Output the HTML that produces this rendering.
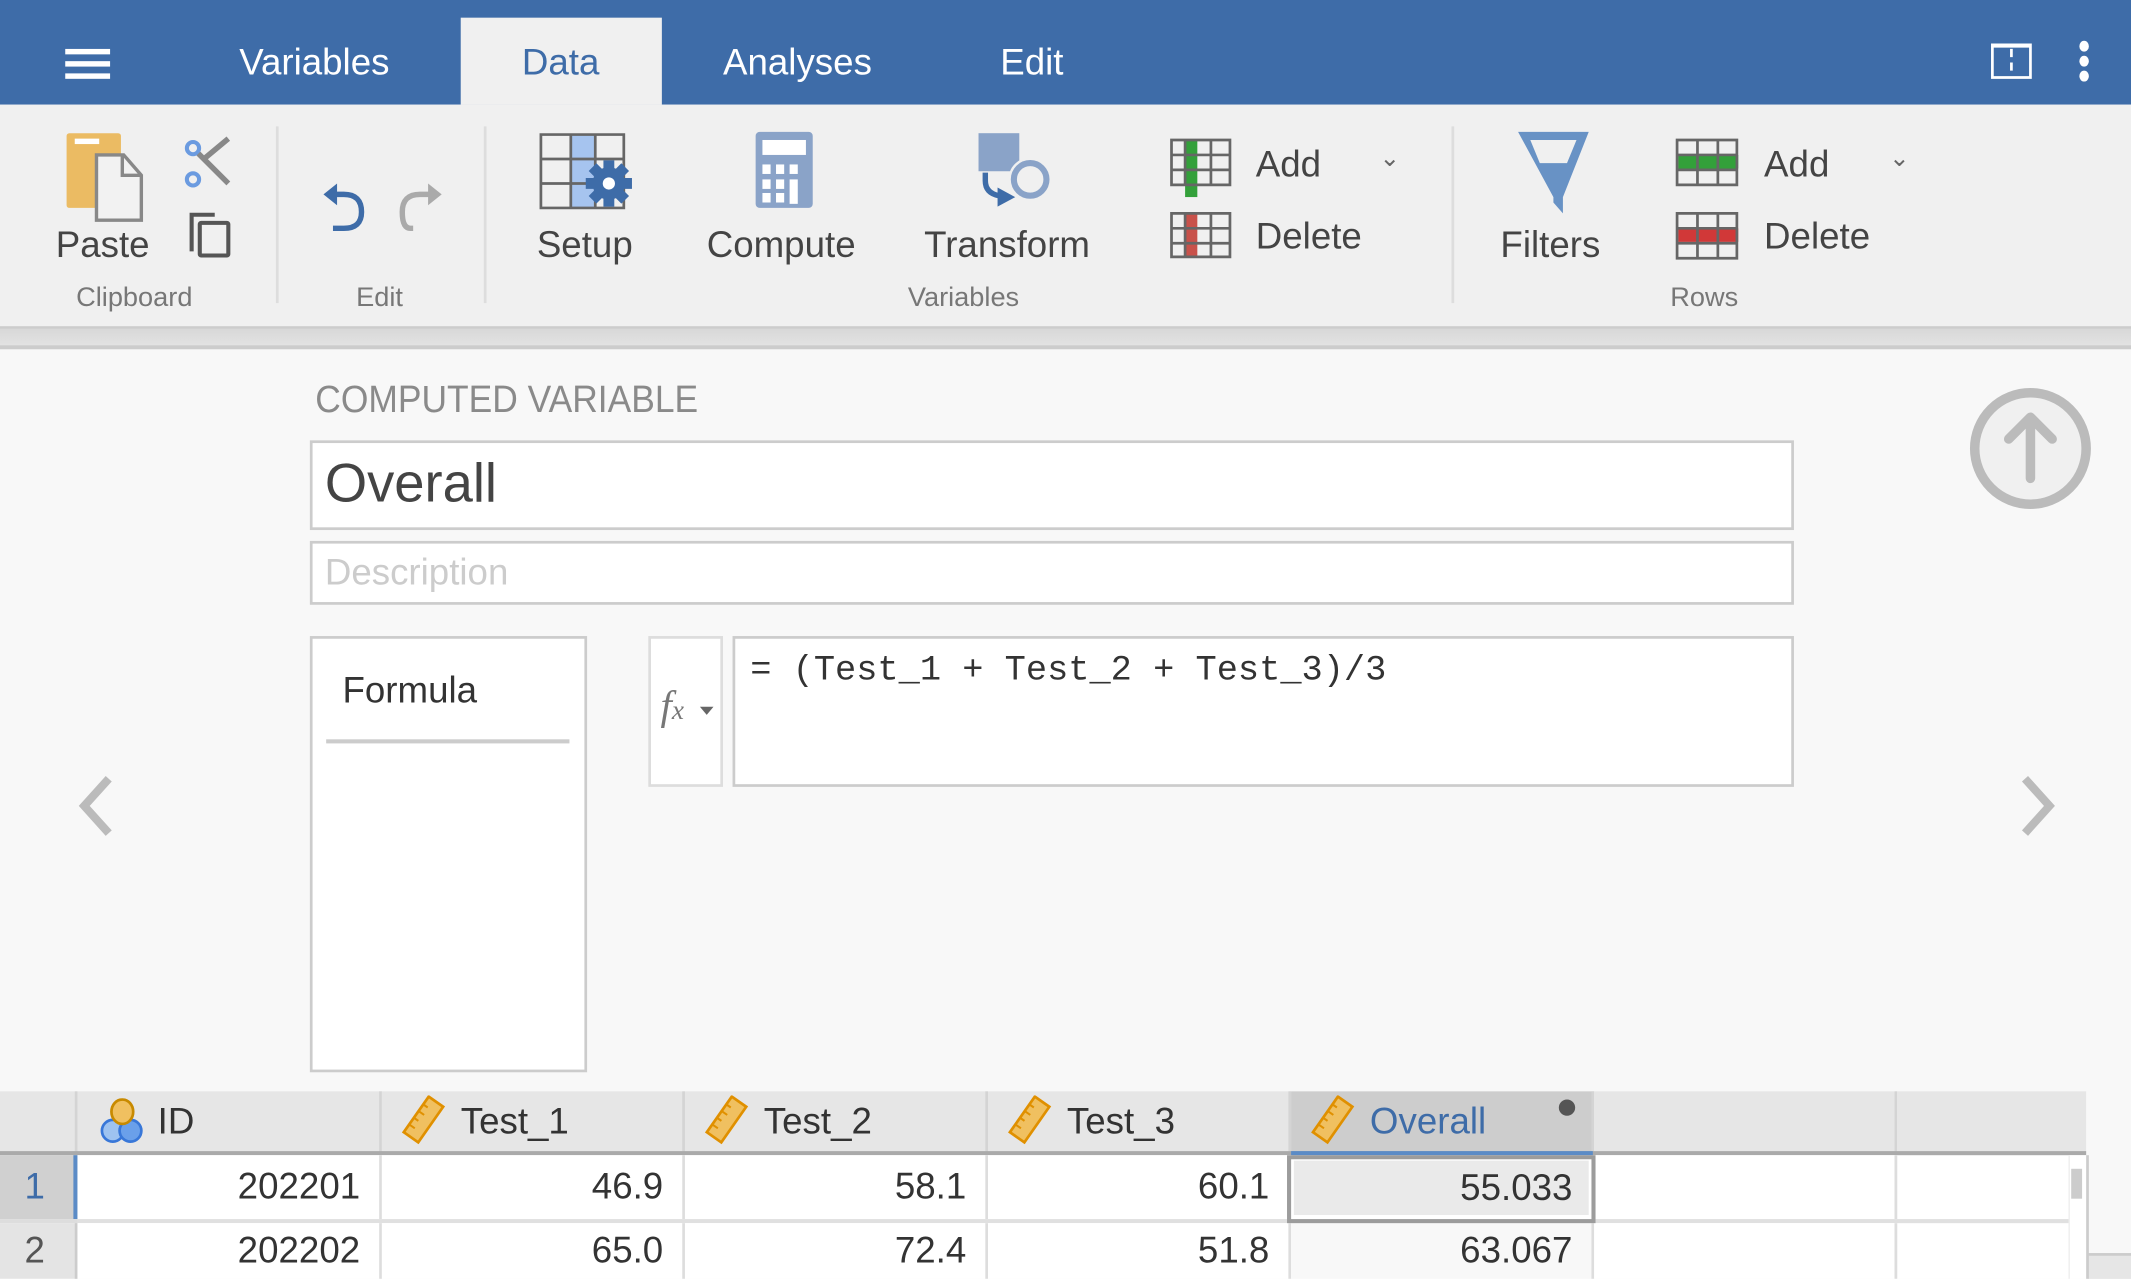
<!DOCTYPE html>
<html><head><meta charset="utf-8">
<style>
html,body{margin:0;padding:0;width:2131px;height:1279px;overflow:hidden;background:#f8f8f8;}
#c{position:absolute;left:0;top:0;width:1568px;height:941px;transform:scale(1.35906);transform-origin:0 0;font-family:"Liberation Sans",sans-serif;background:#f8f8f8;overflow:hidden;}
.a{position:absolute;}
.tab{position:absolute;top:28px;color:#fff;font-size:27px;line-height:36px;}
.lbl{position:absolute;font-size:27px;color:#444;line-height:32px;}
.grp{position:absolute;top:207px;font-size:20px;color:#777;line-height:24px;}
.sep{position:absolute;top:93px;width:2px;height:130px;background:#ddd;}
.hc{position:absolute;top:803px;height:45px;background:#e6e6e6;border-right:2px solid #d4d4d4;box-sizing:border-box;font-size:27px;color:#333;line-height:45px;}
.cell{position:absolute;height:47px;border-right:2px solid #ddd;box-sizing:border-box;font-size:27px;color:#333;text-align:right;padding-right:14px;line-height:47px;background:#fff;}
</style></head><body><div id="c">
<!-- top bar -->
<div class="a" style="left:0;top:0;width:1568px;height:77px;background:#3e6ca8"></div>
<div class="a" style="left:48px;top:36px;width:33px;height:4px;background:#fff"></div>
<div class="a" style="left:48px;top:45px;width:33px;height:4px;background:#fff"></div>
<div class="a" style="left:48px;top:54px;width:33px;height:4px;background:#fff"></div>
<div class="tab" style="left:176px">Variables</div>
<div class="a" style="left:339px;top:13px;width:148px;height:64px;background:#f0f0f0"></div>
<div class="tab" style="left:384px;color:#3e6ca8">Data</div>
<div class="tab" style="left:532px">Analyses</div>
<div class="tab" style="left:736px">Edit</div>
<div class="a" style="left:1465px;top:32px;width:30px;height:26px;border:2px solid #fff;border-top-width:3px;box-sizing:border-box"></div>
<div class="a" style="left:1479px;top:36px;width:1px;height:16px;border-left:2px dashed #fff"></div>
<div class="a" style="left:1530px;top:30px;width:7px;height:8px;border-radius:50%;background:#fff"></div>
<div class="a" style="left:1530px;top:41px;width:7px;height:8px;border-radius:50%;background:#fff"></div>
<div class="a" style="left:1530px;top:52px;width:7px;height:8px;border-radius:50%;background:#fff"></div>
<!-- ribbon -->
<div class="a" style="left:0;top:77px;width:1568px;height:163px;background:#f0f0f0"></div>
<div class="a" style="left:0;top:240px;width:1568px;height:17px;background:linear-gradient(#d8d8d8,#e2e2e2);border-top:2px solid #ccc;border-bottom:3px solid #ccc;box-sizing:border-box"></div>
<svg class="a" style="left:0;top:0" width="1568" height="240" viewBox="0 0 1568 240">
<!-- paste -->
<rect x="49" y="98" width="40" height="55" rx="2" fill="#ebbb63"/><rect x="55" y="102" width="18" height="4" fill="#fff"/>
<path d="M71 114 h20 l13 15 v33 h-33 z" fill="#f2f2f2" stroke="#888" stroke-width="2.5"/><path d="M90 114 v15 h14" fill="none" stroke="#888" stroke-width="2.5"/>
<!-- scissors -->
<circle cx="142" cy="109" r="4.5" fill="none" stroke="#6b9be0" stroke-width="3"/><circle cx="142" cy="132" r="4.5" fill="none" stroke="#6b9be0" stroke-width="3"/>
<path d="M146 113 L168 135 M150 117 L168 102" stroke="#888" stroke-width="4"/>
<!-- copy -->
<path d="M141 185 V158 h17" fill="none" stroke="#555" stroke-width="3"/><rect x="147" y="164" width="21" height="24" rx="1" fill="none" stroke="#555" stroke-width="3"/>
<!-- undo/redo -->
<path d="M244 143 h9 q13 0 13 13 q0 12 -13 12 h-8" fill="none" stroke="#3e6ca8" stroke-width="4"/><path d="M238 143 l10 -8 v16 z" fill="#3e6ca8"/>
<path d="M318 143 h-9 q-13 0 -13 13 q0 12 6 12 h2" fill="none" stroke="#aaa" stroke-width="4"/><path d="M325 143 l-10 -8 v16 z" fill="#aaa"/>
<!-- setup -->
<rect x="420" y="99" width="18" height="54" fill="#a6c4ef"/>
<path d="M398 99 h61 v54 h-61 z M398 117 h61 M398 135 h61 M420 99 v54 M438 99 v54" fill="none" stroke="#666" stroke-width="2"/>
<g transform="translate(448,135)"><path d="M-4 -17 h8 v34 h-8z M-17 -4 h34 v8 h-34z" fill="#3e6ca8" transform="rotate(0)"/><path d="M-4 -17 h8 v34 h-8z M-17 -4 h34 v8 h-34z" fill="#3e6ca8" transform="rotate(45)"/><circle r="12" fill="#3e6ca8"/><circle r="4.5" fill="#fff"/></g>
<!-- compute -->
<rect x="556" y="97" width="42" height="56" rx="3" fill="#8aa3c8"/><rect x="561" y="103" width="32" height="11" fill="#fff"/>
<g fill="#fff"><rect x="561" y="121" width="6" height="7"/><rect x="571" y="121" width="6" height="7"/><rect x="581" y="121" width="6" height="7"/><rect x="561" y="132" width="6" height="7"/><rect x="571" y="132" width="6" height="7"/><rect x="581" y="132" width="6" height="18"/><rect x="561" y="142" width="6" height="7"/><rect x="571" y="142" width="6" height="7"/></g>
<!-- transform -->
<rect x="720" y="98" width="30" height="28" fill="#8aa3c8"/>
<circle cx="758" cy="132" r="16" fill="#f0f0f0"/><circle cx="758" cy="132" r="12" fill="none" stroke="#8aa3c8" stroke-width="4.5"/>
<path d="M725 127 v6 q0 9 10 11" fill="none" stroke="#3e6ca8" stroke-width="4"/><path d="M734 138 l13 7 l-13 7 z" fill="#3e6ca8"/>
<!-- var add/delete -->
<rect x="872" y="103" width="9" height="42" fill="#33a03a"/><rect x="872" y="157" width="9" height="32" fill="#c8514a"/>
<path d="M862 103h43v33h-43zM862 114h43M862 125h43M872 103v33M891 103v33" fill="none" stroke="#666" stroke-width="2"/>
<path d="M862 157h43v32h-43zM862 168h43M862 179h43M872 157v32M891 157v32" fill="none" stroke="#666" stroke-width="2"/>
<!-- filters -->
<path d="M1117 97 h52 l-19 48 v12 l-7 -8 v-4 z" fill="#6892c5"/><path d="M1126 103 h34 l-7 17 h-20 z" fill="#f0f0f0"/>
<!-- rows add/delete -->
<rect x="1235" y="114" width="44" height="10" fill="#33a03a"/><rect x="1235" y="168" width="44" height="10" fill="#d13838"/>
<path d="M1234 103h44v33h-44zM1234 114h44M1234 125h44M1249 103v33M1264 103v33" fill="none" stroke="#666" stroke-width="2"/>
<path d="M1234 157h44v33h-44zM1234 168h44M1234 179h44M1249 157v33M1264 157v33" fill="none" stroke="#666" stroke-width="2"/>
</svg>
<div class="lbl" style="left:41px;top:164px">Paste</div>
<div class="grp" style="left:56px">Clipboard</div>
<div class="sep" style="left:203px"></div>
<div class="grp" style="left:262px">Edit</div>
<div class="sep" style="left:356px"></div>
<div class="lbl" style="left:395px;top:164px">Setup</div>
<div class="lbl" style="left:520px;top:164px">Compute</div>
<div class="lbl" style="left:680px;top:164px">Transform</div>
<div class="lbl" style="left:924px;top:105px">Add</div>
<div class="lbl" style="left:924px;top:158px">Delete</div>
<div class="a" style="left:1015px;top:106px;font-size:18px;color:#666">&#8964;</div>
<div class="grp" style="left:668px">Variables</div>
<div class="sep" style="left:1068px"></div>
<div class="lbl" style="left:1104px;top:164px">Filters</div>
<div class="lbl" style="left:1298px;top:105px">Add</div>
<div class="lbl" style="left:1298px;top:158px">Delete</div>
<div class="a" style="left:1390px;top:106px;font-size:18px;color:#666">&#8964;</div>
<div class="grp" style="left:1229px">Rows</div>
<!-- content -->
<div class="a" style="left:232px;top:278px;font-size:28px;color:#8a8a8a;font-weight:300;transform:scaleX(0.93);transform-origin:0 0">COMPUTED VARIABLE</div>
<div class="a" style="left:228px;top:324px;width:1092px;height:66px;background:#fff;border:2px solid #ccc;box-sizing:border-box"></div>
<div class="a" style="left:239px;top:334px;font-size:40px;color:#444">Overall</div>
<div class="a" style="left:228px;top:398px;width:1092px;height:47px;background:#fff;border:2px solid #ccc;box-sizing:border-box"></div>
<div class="a" style="left:239px;top:406px;font-size:27px;color:#ccc">Description</div>
<div class="a" style="left:228px;top:468px;width:204px;height:321px;background:#fff;border:2px solid #ccc;box-sizing:border-box"></div>
<div class="a" style="left:252px;top:493px;font-size:27px;color:#333">Formula</div>
<div class="a" style="left:240px;top:544px;width:179px;height:3px;background:#ccc"></div>
<div class="a" style="left:477px;top:468px;width:55px;height:111px;background:#fff;border:2px solid #ddd;box-sizing:border-box"></div>
<div class="a" style="left:486px;top:503px;font-size:30px;color:#777;font-family:'Liberation Serif',serif;font-style:italic">f<span style="font-size:20px">x</span></div>
<div class="a" style="left:515px;top:520px;width:0;height:0;border-left:5px solid transparent;border-right:5px solid transparent;border-top:6px solid #666"></div>
<div class="a" style="left:539px;top:468px;width:781px;height:111px;background:#fff;border:2px solid #ccc;box-sizing:border-box"></div>
<div class="a" style="left:552px;top:478px;font-size:26px;color:#333;font-family:'Liberation Mono',monospace;white-space:pre">= (Test_1 + Test_2 + Test_3)/3</div>
<svg class="a" style="left:1448px;top:284px" width="92" height="92" viewBox="0 0 92 92">
<circle cx="46" cy="46" r="41" fill="#f0f0f0" stroke="#bbb" stroke-width="7"/>
<path d="M46 68 V23 M30 39 L46 23 L62 39" fill="none" stroke="#bbb" stroke-width="7" stroke-linecap="round" stroke-linejoin="round"/>
</svg>
<svg class="a" style="left:54px;top:570px" width="34" height="46" viewBox="0 0 34 46"><path d="M26 3 L8 23 L26 43" fill="none" stroke="#bbb" stroke-width="6"/></svg>
<svg class="a" style="left:1482px;top:570px" width="34" height="46" viewBox="0 0 34 46"><path d="M8 3 L26 23 L8 43" fill="none" stroke="#bbb" stroke-width="6"/></svg>
<!-- table -->
<div class="a" style="left:0;top:803px;width:1535px;height:138px;background:#fff"></div>
<div class="a" style="left:1535px;top:803px;width:33px;height:138px;background:#f8f8f8"></div>
<div class="a" style="left:1535px;top:922px;width:33px;height:19px;background:#e6e6e6;border-top:2px solid #ccc"></div>
<div class="hc" style="left:0;width:57px"></div>
<div class="hc" style="left:57px;width:224px;padding-left:59px">ID</div>
<div class="hc" style="left:281px;width:223px;padding-left:58px">Test_1</div>
<div class="hc" style="left:504px;width:223px;padding-left:58px">Test_2</div>
<div class="hc" style="left:727px;width:223px;padding-left:58px">Test_3</div>
<div class="hc" style="left:950px;width:223px;padding-left:58px;background:#cdcdcd;color:#3e6ca8">Overall</div>
<div class="hc" style="left:1173px;width:223px"></div>
<div class="hc" style="left:1396px;width:139px;border-right:none"></div>
<div class="a" style="left:1147px;top:809px;width:12px;height:12px;border-radius:50%;background:#555"></div>
<svg class="a" style="left:72px;top:808px" width="36" height="34" viewBox="0 0 36 34">
<circle cx="11" cy="24" r="8" fill="#9ec3f0" stroke="#3877d8" stroke-width="2"/><circle cx="24" cy="24" r="8" fill="#6aa0ea" stroke="#3877d8" stroke-width="2"/>
<ellipse cx="18" cy="10" rx="8" ry="9" fill="#f0c060" stroke="#c88a00" stroke-width="2"/>
</svg>
<svg class="a" style="left:294px;top:806px" width="36" height="36" viewBox="0 0 36 36"><g transform="rotate(-55 18 18)"><rect x="2" y="11" width="32" height="13" fill="#f0c060" stroke="#e09000" stroke-width="2"/><path d="M9 11v5M15 11v4M21 11v5M27 11v4" stroke="#e09000" stroke-width="1.5"/></g></svg>
<svg class="a" style="left:517px;top:806px" width="36" height="36" viewBox="0 0 36 36"><g transform="rotate(-55 18 18)"><rect x="2" y="11" width="32" height="13" fill="#f0c060" stroke="#e09000" stroke-width="2"/><path d="M9 11v5M15 11v4M21 11v5M27 11v4" stroke="#e09000" stroke-width="1.5"/></g></svg>
<svg class="a" style="left:740px;top:806px" width="36" height="36" viewBox="0 0 36 36"><g transform="rotate(-55 18 18)"><rect x="2" y="11" width="32" height="13" fill="#f0c060" stroke="#e09000" stroke-width="2"/><path d="M9 11v5M15 11v4M21 11v5M27 11v4" stroke="#e09000" stroke-width="1.5"/></g></svg>
<svg class="a" style="left:963px;top:806px" width="36" height="36" viewBox="0 0 36 36"><g transform="rotate(-55 18 18)"><rect x="2" y="11" width="32" height="13" fill="#f0c060" stroke="#e09000" stroke-width="2"/><path d="M9 11v5M15 11v4M21 11v5M27 11v4" stroke="#e09000" stroke-width="1.5"/></g></svg>
<div class="a" style="left:0;top:847px;width:1535px;height:3px;background:#aaa"></div>
<div class="a" style="left:950px;top:847px;width:222px;height:5px;background:#5b8bc6"></div>
<!-- row numbers -->
<div class="a" style="left:0;top:850px;width:57px;height:47px;background:#d0d0d0;border-right:3px solid #5b8bc6;box-sizing:border-box;color:#3e6ca8;font-size:27px;line-height:47px;padding-left:18px">1</div>
<div class="a" style="left:0;top:897px;width:57px;height:3px;background:#ddd"></div>
<div class="a" style="left:0;top:900px;width:57px;height:41px;background:#e4e4e4;border-right:2px solid #ccc;box-sizing:border-box;color:#555;font-size:27px;line-height:41px;padding-left:18px">2</div>
<!-- rows -->
<div class="cell" style="left:57px;top:850px;width:224px">202201</div>
<div class="cell" style="left:281px;top:850px;width:223px">46.9</div>
<div class="cell" style="left:504px;top:850px;width:223px">58.1</div>
<div class="cell" style="left:727px;top:850px;width:223px">60.1</div>
<div class="cell" style="left:1173px;top:850px;width:223px"></div>
<div class="a" style="left:57px;top:897px;width:1465px;height:3px;background:#e0e0e0"></div>
<div class="cell" style="left:57px;top:900px;width:224px;height:41px;line-height:41px">202202</div>
<div class="cell" style="left:281px;top:900px;width:223px;height:41px;line-height:41px">65.0</div>
<div class="cell" style="left:504px;top:900px;width:223px;height:41px;line-height:41px">72.4</div>
<div class="cell" style="left:727px;top:900px;width:223px;height:41px;line-height:41px">51.8</div>
<div class="cell" style="left:950px;top:900px;width:223px;height:41px;line-height:41px;background:#f8f8f8">63.067</div>
<div class="cell" style="left:1173px;top:900px;width:223px;height:41px"></div>
<div class="a" style="left:947px;top:850px;width:227px;height:50px;border:3px solid #9c9c9c;box-sizing:border-box;background:#fff"></div>
<div class="a" style="left:952px;top:854px;width:217px;height:40px;background:#eaeaea;font-size:27px;color:#333;text-align:right;line-height:40px;box-sizing:border-box;padding-right:12px">55.033</div>
<!-- scrollbar -->
<div class="a" style="left:1522px;top:850px;width:13px;height:91px;background:#fff;border-left:1px solid #eee"></div>
<div class="a" style="left:1524px;top:860px;width:8px;height:22px;background:#ccc"></div>
<div class="a" style="left:1535px;top:850px;width:2px;height:91px;background:#ccc"></div>
</div></body></html>
